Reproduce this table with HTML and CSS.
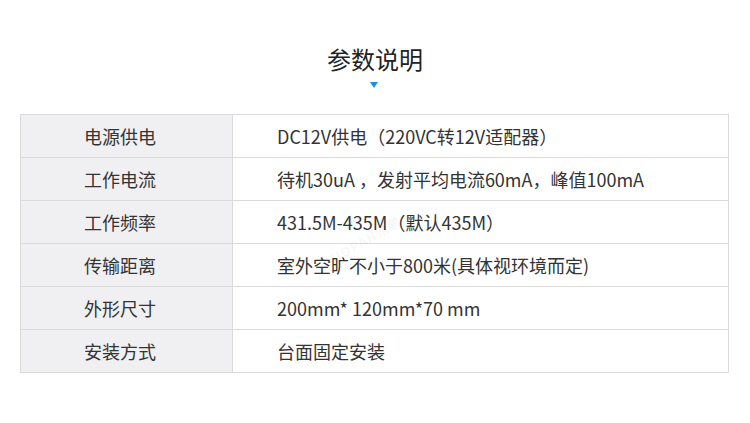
FILE: index.html
```html
<!DOCTYPE html>
<html lang="zh">
<head>
<meta charset="utf-8">
<link rel="stylesheet" href="styles.css">
</head>
<body>
<div class="page">
  <h1 class="title">参数说明</h1>
  <div class="arrow"></div>
  <table class="spec">
    <tr><td class="k">电源供电</td><td class="v">DC12V供电（220VC转12V适配器）</td></tr>
    <tr><td class="k">工作电流</td><td class="v">待机30uA ，发射平均电流60mA，峰值100mA</td></tr>
    <tr><td class="k">工作频率</td><td class="v">431.5M-435M（默认435M）</td></tr>
    <tr><td class="k">传输距离</td><td class="v">室外空旷不小于800米(具体视环境而定)</td></tr>
    <tr><td class="k">外形尺寸</td><td class="v">200mm* 120mm*70 mm</td></tr>
    <tr><td class="k">安装方式</td><td class="v">台面固定安装</td></tr>
  </table>
  <div class="mark">SUOPAN讯鹏</div>
</div>
</body>
</html>
```
FILE: styles.css
```css
html, body {
  margin: 0;
  padding: 0;
  background: #fff;
}
body {
  font-family: "Noto Sans CJK SC", "Noto Sans", sans-serif;
  color: #333;
}
.page {
  position: relative;
  width: 750px;
  height: 423px;
  overflow: hidden;
}
.title {
  margin: 0;
  padding-top: 42px;
  height: 34px;
  line-height: 34px;
  font-size: 24px;
  font-weight: 400;
  text-align: center;
  color: #222;
}
.arrow {
  width: 0;
  height: 0;
  margin: 6px auto 0 370px;
  border-left: 4px solid transparent;
  border-right: 4px solid transparent;
  border-top: 6px solid #1a8fe6;
}
.spec {
  margin: 26px 0 0 20px;
  width: 709px;
  border-collapse: collapse;
  font-size: 18px;
}
.spec td {
  border: 1px solid #dadada;
  height: 42px;
  padding: 0;
  line-height: 22px;
}
.spec .k {
  width: 198px;
  padding-right: 13px;
  background: #f0f0f2;
  text-align: center;
  color: #333;
}
.spec .v {
  padding-left: 44px;
  color: #333;
}
.mark {
  position: absolute;
  left: 318px;
  top: 232px;
  font-size: 13px;
  font-weight: 700;
  color: rgba(0,0,0,0.05);
  transform: rotate(-30deg);
  letter-spacing: 1px;
}
```
